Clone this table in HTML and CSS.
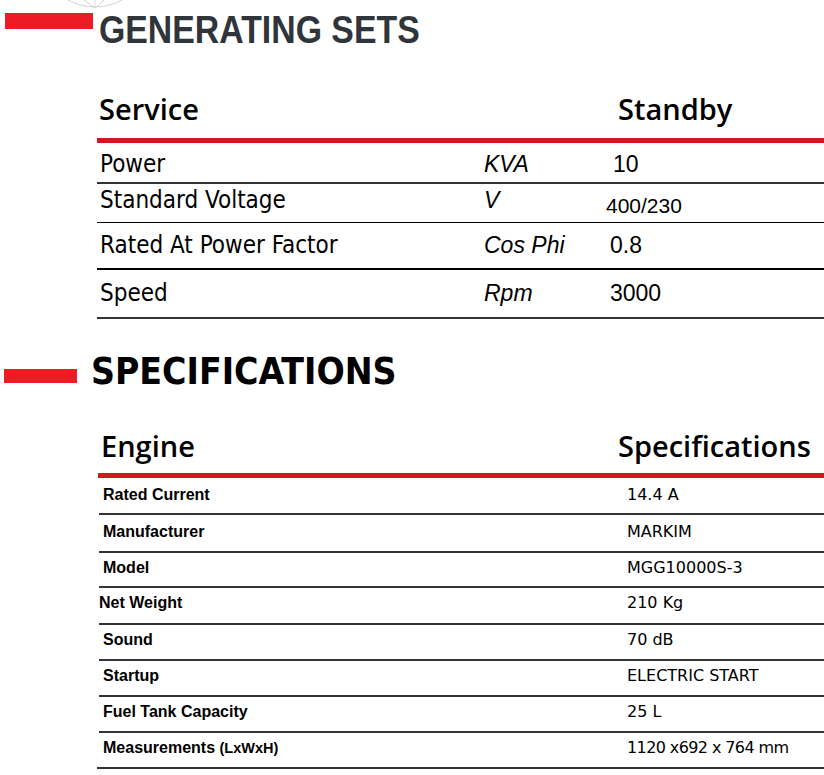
FILE: index.html
```html
<!DOCTYPE html>
<html lang="en">
<head>
<meta charset="utf-8">
<title>Generating Sets</title>
<link rel="stylesheet" href="styles.css">
</head>
<body>
<div class="page">
  <svg class="logo" width="70" height="12" viewBox="0 0 70 12" aria-hidden="true">
    <path d="M2 0 A56 56 0 0 0 56 0" fill="none" stroke="#d2d2d2" stroke-width="1"/>
    <path d="M18 0 Q24 5 29 8 Q34 4 38 0" fill="none" stroke="#d2d2d2" stroke-width="1"/>
    <path d="M29 0 L29 8" fill="none" stroke="#dcdcdc" stroke-width="1"/>
  </svg>

  <div class="section-head head1">
    <span class="bar bar1"></span>
    <h1 class="title1">GENERATING SETS</h1>
  </div>

  <div class="table t1">
    <div class="thead th1">
      <span>Service</span>
      <span>Standby</span>
    </div>
    <div class="row r1">
      <span class="lab">Power</span><span class="unit">KVA</span><span class="val v-right">10</span>
    </div>
    <div class="row r2">
      <span class="lab">Standard Voltage</span><span class="unit">V</span><span class="val v-small">400/230</span>
    </div>
    <div class="row r3">
      <span class="lab">Rated At Power Factor</span><span class="unit">Cos Phi</span><span class="val">0.8</span>
    </div>
    <div class="row r4">
      <span class="lab">Speed</span><span class="unit">Rpm</span><span class="val">3000</span>
    </div>
  </div>

  <div class="section-head head2">
    <span class="bar bar2"></span>
    <h2 class="title2">SPECIFICATIONS</h2>
  </div>

  <div class="table t2">
    <div class="thead th2">
      <span>Engine</span>
      <span>Specifications</span>
    </div>
    <div class="srow"><span class="slab">Rated Current</span><span class="sval">14.4 A</span></div>
    <div class="srow"><span class="slab">Manufacturer</span><span class="sval">MARKIM</span></div>
    <div class="srow"><span class="slab">Model</span><span class="sval">MGG10000S-3</span></div>
    <div class="srow"><span class="slab slab-out">Net Weight</span><span class="sval">210 Kg</span></div>
    <div class="srow"><span class="slab">Sound</span><span class="sval">70 dB</span></div>
    <div class="srow"><span class="slab">Startup</span><span class="sval">ELECTRIC START</span></div>
    <div class="srow"><span class="slab">Fuel Tank Capacity</span><span class="sval">25 L</span></div>
    <div class="srow last"><span class="slab">Measurements <span class="small">(LxWxH)</span></span><span class="sval sval-tight">1120 x692 x 764 mm</span></div>
  </div>
</div>
</body>
</html>
```

FILE: styles.css
```css
html, body {
  margin: 0;
  padding: 0;
  background: #fff;
}

.page {
  position: relative;
  width: 824px;
  height: 775px;
  overflow: hidden;
}

.logo {
  position: absolute;
  left: 66px;
  top: 0;
}

.section-head {
  display: flex;
  align-items: flex-start;
}

.head1 {
  padding-top: 10px;
  padding-left: 5px;
}

.bar {
  display: block;
  background: #ed1c24;
  flex: none;
}

.bar1 {
  width: 88px;
  height: 16px;
  margin-top: 3px;
  margin-right: 6px;
}

.title1 {
  margin: 0;
  font-family: "Liberation Sans", Arial, sans-serif;
  font-weight: bold;
  font-size: 38px;
  line-height: 40px;
  color: #30343b;
  white-space: nowrap;
  transform: scaleX(0.89);
  transform-origin: left center;
}

.table {
  color: #000;
}

.thead {
  display: grid;
  font-family: "Open Sans", sans-serif;
  font-weight: 600;
  font-size: 29px;
  line-height: 36px;
  padding-left: 2px;
}

.th1 {
  grid-template-columns: 519px 1fr;
  height: 36px;
  padding-bottom: 11px;
  border-bottom: 5px solid #d0191e;
}

.t1 {
  margin-left: 97px;
  margin-top: 41px;
}

.row {
  display: grid;
  grid-template-columns: 384px 126px 1fr;
  padding-left: 3px;
  box-sizing: border-box;
  line-height: 28px;
}

.lab {
  font-family: "DejaVu Sans Condensed", "DejaVu Sans", sans-serif;
  font-size: 24px;
}

.unit {
  font-family: "Liberation Sans", Arial, sans-serif;
  font-style: italic;
  font-size: 23px;
}

.val {
  font-family: "Liberation Sans", Arial, sans-serif;
  font-size: 23px;
}

.v-right {
  padding-left: 3px;
}

.v-small {
  font-size: 21px;
  padding-top: 6px;
  margin-left: -4px;
}

.r1 {
  padding-top: 7px;
  height: 41px;
  border-bottom: 2px solid #333;
}

.r2 {
  padding-top: 2px;
  height: 39px;
  border-bottom: 1px solid #000;
}

.r3 {
  padding-top: 8px;
  height: 47px;
  border-bottom: 2px solid #000;
}

.r4 {
  padding-top: 9px;
  height: 49px;
  border-bottom: 2px solid #333;
}

.head2 {
  margin-top: 33px;
  padding-left: 4px;
}

.bar2 {
  width: 73px;
  height: 14px;
  margin-top: 17px;
  margin-right: 14px;
}

.title2 {
  margin: 0;
  font-family: "DejaVu Sans Condensed", "DejaVu Sans", sans-serif;
  font-weight: bold;
  font-size: 37px;
  line-height: 40px;
  color: #000;
}

.t2 {
  margin-left: 98px;
  margin-top: 36px;
}

.th2 {
  grid-template-columns: 517px 1fr;
  height: 36px;
  padding-left: 3px;
  padding-bottom: 9px;
  border-bottom: 5px solid #d0191e;
}

.srow {
  display: grid;
  grid-template-columns: 524px 1fr;
  align-items: baseline;
  box-sizing: border-box;
  height: 36px;
  padding-top: 5px;
  padding-left: 4px;
  margin-left: 1px;
  line-height: 20px;
  border-bottom: 2px solid #333;
}

.srow:nth-of-type(2) {
  height: 37px;
  padding-top: 7px;
}

.srow:nth-of-type(3) {
  height: 38px;
  padding-top: 7px;
}

.srow:nth-of-type(4) {
  height: 35px;
}

.srow:nth-of-type(5) {
  height: 37px;
}

.srow.last {
  margin-left: -1px;
  padding-left: 6px;
}

.slab {
  font-family: "Liberation Sans", Arial, sans-serif;
  font-weight: bold;
  font-size: 16px;
}

.slab-out {
  margin-left: -4px;
}

.small {
  font-size: 14.5px;
}

.sval {
  font-family: "DejaVu Sans", sans-serif;
  font-size: 16px;
}

.sval-tight {
  letter-spacing: -0.6px;
}
```
